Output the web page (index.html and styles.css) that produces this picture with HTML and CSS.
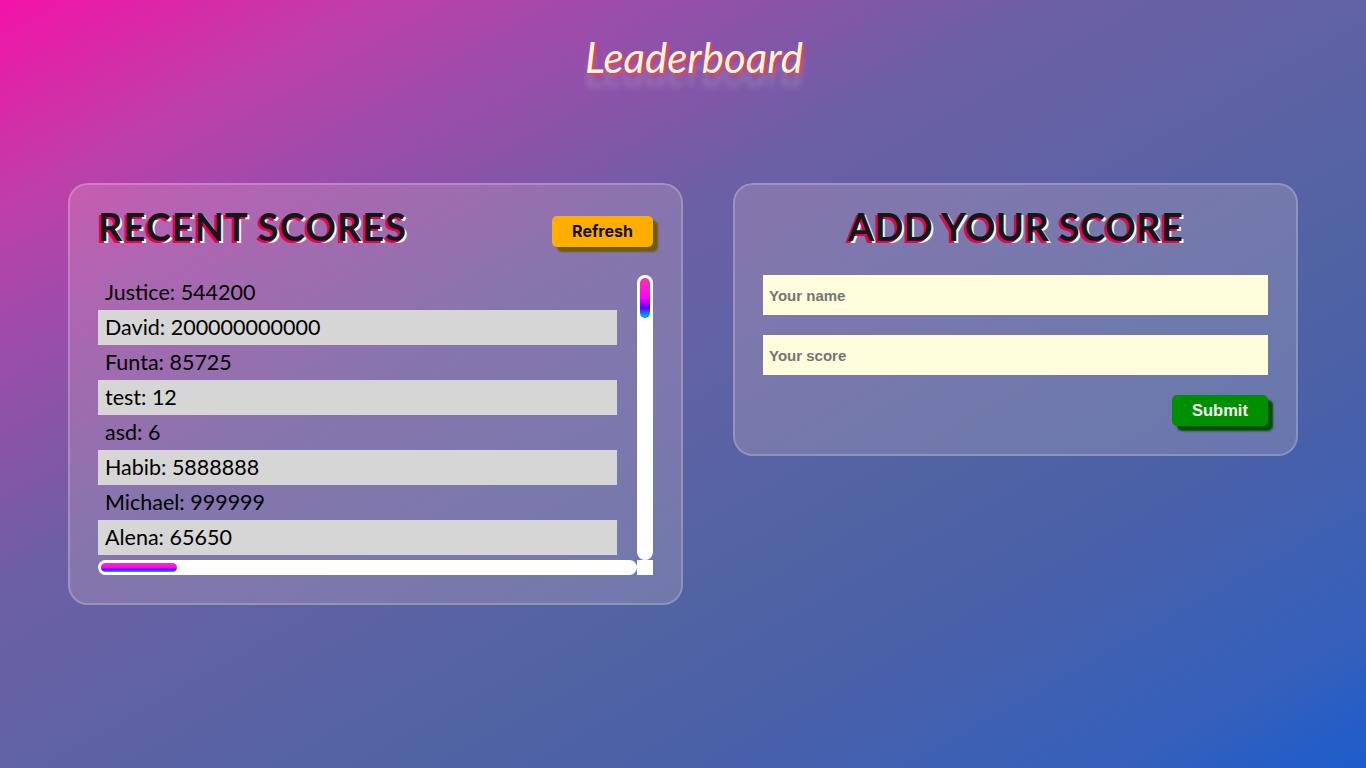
FILE: index.html
```html
<!DOCTYPE html>
<html lang="en">
<head>
  <meta charset="UTF-8">
  <title>Leaderboard</title>
  <link rel="stylesheet" href="styles.css">
</head>
<body>
  <h1 class="title">Leaderboard</h1>

  <main class="board">
    <section class="card">
      <div class="card-head">
        <h2>Recent Scores</h2>
        <button class="btn btn-refresh" type="button">Refresh</button>
      </div>
      <div class="score-box">
        <ul class="score-list">
          <li>Justice: 544200</li>
          <li>David: 200000000000</li>
          <li>Funta: 85725</li>
          <li>test: 12</li>
          <li>asd: 6</li>
          <li>Habib: 5888888</li>
          <li>Michael: 999999</li>
          <li>Alena: 65650</li>
        </ul>
        <div class="bar bar-v"><div class="thumb"></div></div>
        <div class="bar bar-h"><div class="thumb"></div></div>
        <div class="bar-corner"></div>
      </div>
    </section>

    <section class="card card-form">
      <h2>Add Your Score</h2>
      <form class="score-form">
        <input type="text" placeholder="Your name">
        <input type="text" placeholder="Your score">
        <button class="btn btn-submit" type="button">Submit</button>
      </form>
    </section>
  </main>
</body>
</html>
```

FILE: styles.css
```css
html {
  height: 100%;
}

body {
  margin: 0;
  height: 100%;
  overflow: hidden;
  box-sizing: border-box;
  padding: 0 68px;
  font-family: "Liberation Sans", Arial, sans-serif;
  background: linear-gradient(to bottom right, #f412a8 0%, #bd40a8 14%, #a24aab 21%, #6d5fa5 38%, #6062a5 50%, #5063a3 65%, #4a60a8 75%, #3560bb 91%, #1c5ccc 100%);
}

.title {
  margin: 0;
  padding: 28px 0 0 22px;
  height: 183px;
  box-sizing: border-box;
  text-align: center;
  font-family: "Lato", sans-serif;
  font-style: italic;
  font-size: 42px;
  font-weight: 400;
  line-height: 58px;
  color: #fff3d6;
  text-shadow: 2px 2px 3px #f0404a, 0 14px 6px rgba(255, 255, 255, 0.2);
}

.board {
  display: grid;
  grid-template-columns: 615px 565px;
  gap: 50px;
  align-items: start;
}

.card {
  box-sizing: border-box;
  height: 422px;
  padding: 22px 28px 0;
  border: 2px solid rgba(255, 255, 255, 0.2);
  border-radius: 20px;
  background: rgba(255, 222, 210, 0.18);
}

.card-form {
  height: 273px;
}

.card-head {
  display: flex;
  justify-content: space-between;
  align-items: flex-start;
}

h2 {
  margin: 0;
  font-family: "Lato", sans-serif;
  font-size: 38px;
  font-weight: 700;
  line-height: 38px;
  letter-spacing: 1px;
  text-transform: uppercase;
  color: #161616;
  text-shadow: -2px 2px 0 #e8005c, 2px 2px 0 #f5f5e6;
}

.card-form h2 {
  text-align: center;
  letter-spacing: 0.4px;
}

.btn {
  border: none;
  border-radius: 5px;
  height: 31px;
  font-weight: bold;
  cursor: pointer;
}

.btn-refresh {
  width: 101px;
  margin-top: 9px;
  padding-bottom: 3px;
  font-family: "Inter", sans-serif;
  font-size: 16px;
  color: #111;
  background-color: #ffae00;
  box-shadow: 5px 5px 2px #6f5c14;
}

.btn-submit {
  align-self: flex-end;
  width: 96px;
  font-family: "Liberation Sans", Arial, sans-serif;
  font-size: 16.5px;
  color: #f4f4f4;
  background-color: #008f00;
  box-shadow: 5px 5px 2px #005200;
}

.score-box {
  display: grid;
  grid-template-columns: 539px 16px;
  grid-template-rows: 285px 15px;
  margin-top: 28px;
}

.score-list {
  list-style: none;
  margin: 0;
  padding: 0 20px 0 0;
  overflow: hidden;
  font-family: "Lato", sans-serif;
  font-size: 21.5px;
  color: #000;
}

.score-list li {
  height: 35px;
  line-height: 34px;
  padding-left: 7px;
}

.score-list li:nth-child(even) {
  background-color: #d6d6d6;
}

.bar {
  box-sizing: border-box;
  padding: 3px;
  background: #fff;
  border-radius: 8px;
}

.bar-corner {
  background: #fff;
}

.thumb {
  border-radius: 5px;
  background: linear-gradient(180deg, #f53a9c, #f0f 50%, #50f 75%, #09f 92%);
}

.bar-v .thumb {
  height: 40px;
}

.bar-h .thumb {
  width: 76px;
  height: 9px;
}

.score-form {
  display: flex;
  flex-direction: column;
  gap: 20px;
  margin-top: 30px;
}

.score-form input {
  box-sizing: border-box;
  width: 100%;
  height: 40px;
  padding: 0 6px;
  border: none;
  outline: none;
  font-family: "Liberation Sans", Arial, sans-serif;
  font-size: 15px;
  font-weight: bold;
  background-color: #fefedc;
}
```
